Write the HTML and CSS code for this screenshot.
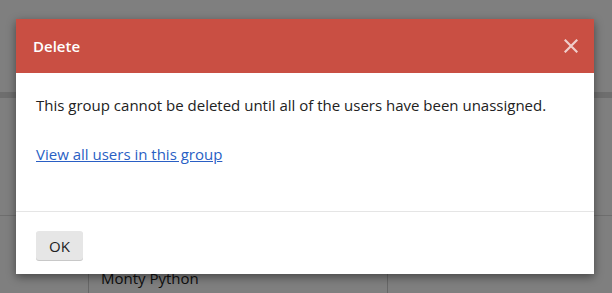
FILE: index.html
```html
<!DOCTYPE html>
<html lang="en">
<head>
    <meta charset="UTF-8">
    <title>Delete group</title>
    <link rel="stylesheet" href="styles.css">
</head>
<body>
    <div class="page">
        <div class="tabs">
            <span class="tab">Users</span>
            <span class="tab">Permissions</span>
        </div>
        <div class="tab-bar"></div>
        <div class="table">
            <div class="row">
                <div class="cell cell-first"></div>
                <div class="cell cell-name"></div>
                <div class="cell"></div>
            </div>
            <div class="row">
                <div class="cell cell-first"></div>
                <div class="cell cell-name">Monty Python</div>
                <div class="cell"></div>
            </div>
        </div>
    </div>

    <div class="overlay">
        <div class="modal">
            <div class="modal-header">
                <h2>Delete</h2>
                <button class="close" aria-label="Close">
                    <svg width="14" height="14" viewBox="0 0 14 14">
                        <path d="M1.5 1.5 L12.5 12.5 M12.5 1.5 L1.5 12.5" stroke="currentColor" stroke-width="2.2" stroke-linecap="square"/>
                    </svg>
                </button>
            </div>
            <div class="modal-body">
                <p>This group cannot be deleted until all of the users have been unassigned.</p>
                <p><a href="#">View all users in this group</a></p>
            </div>
            <div class="modal-footer">
                <button class="btn">OK</button>
            </div>
        </div>
    </div>
</body>
</html>
```

FILE: styles.css
```css
body {
    margin: 0;
    font-family: "Open Sans", "Lato", sans-serif;
    background: #ffffff;
    overflow: hidden;
    width: 612px;
    height: 293px;
    position: relative;
}

/* pagina por baixo do modal */
.page {
    padding-top: 55px;
}

.tabs {
    display: flex;
    gap: 30px;
    margin-left: -40px;
    height: 37px;
    font-size: 15px;
    color: #555;
}

.tab {
    line-height: 22px;
}

.tab-bar {
    height: 6px;
    background: #dcdcdc;
}

.table {
    margin-top: 117px;
}

.row {
    display: flex;
    height: 56px;
    border-top: 1px solid #dddddd;
}

.cell {
    flex: 1;
}

.cell-first {
    flex: 0 0 88px;
    border-right: 1px solid #cfcfcf;
}

.cell-name {
    flex: 0 0 286px;
    border-right: 1px solid #cfcfcf;
    padding-left: 12px;
    font-size: 15px;
    color: #222;
    line-height: 24px;
}

.row + .row {
    border-top: none;
    height: 57px;
    margin-top: -6px;
}

/* fundo escuro */
.overlay {
    position: absolute;
    inset: 0;
    background: rgba(0, 0, 0, 0.5);
}

.modal {
    margin: 19px 0 0 16px;
    width: 578px;
    background: #ffffff;
    box-shadow: 0 3px 9px rgba(0, 0, 0, 0.45);
}

.modal-header {
    display: flex;
    align-items: center;
    justify-content: space-between;
    height: 54px;
    padding: 0 16px 0 17px;
    background: #c94f43;
    color: #ffffff;
}

.modal-header h2 {
    margin: 0;
    font-size: 15px;
    font-weight: 600;
}

.close {
    border: none;
    background: none;
    padding: 0;
    color: rgba(255, 255, 255, 0.72);
    display: flex;
    margin-top: -1px;
}

.modal-body {
    padding: 22px 20px 47px;
    border-bottom: 1px solid #e5e5e5;
    font-size: 15px;
    color: #222;
}

.modal-body p {
    margin: 0;
    line-height: 20px;
}

.modal-body p + p {
    margin-top: 29px;
}

.modal-body a {
    color: #2a5fc4;
}

.modal-footer {
    padding: 19px 20px 14px;
}

.btn {
    font-family: inherit;
    font-size: 15px;
    color: #222;
    background: #e6e6e6;
    border: none;
    border-radius: 3px;
    box-shadow: 0 1px 0 #c8c8c8;
    width: 47px;
    height: 29px;
    padding: 0;
}
```
